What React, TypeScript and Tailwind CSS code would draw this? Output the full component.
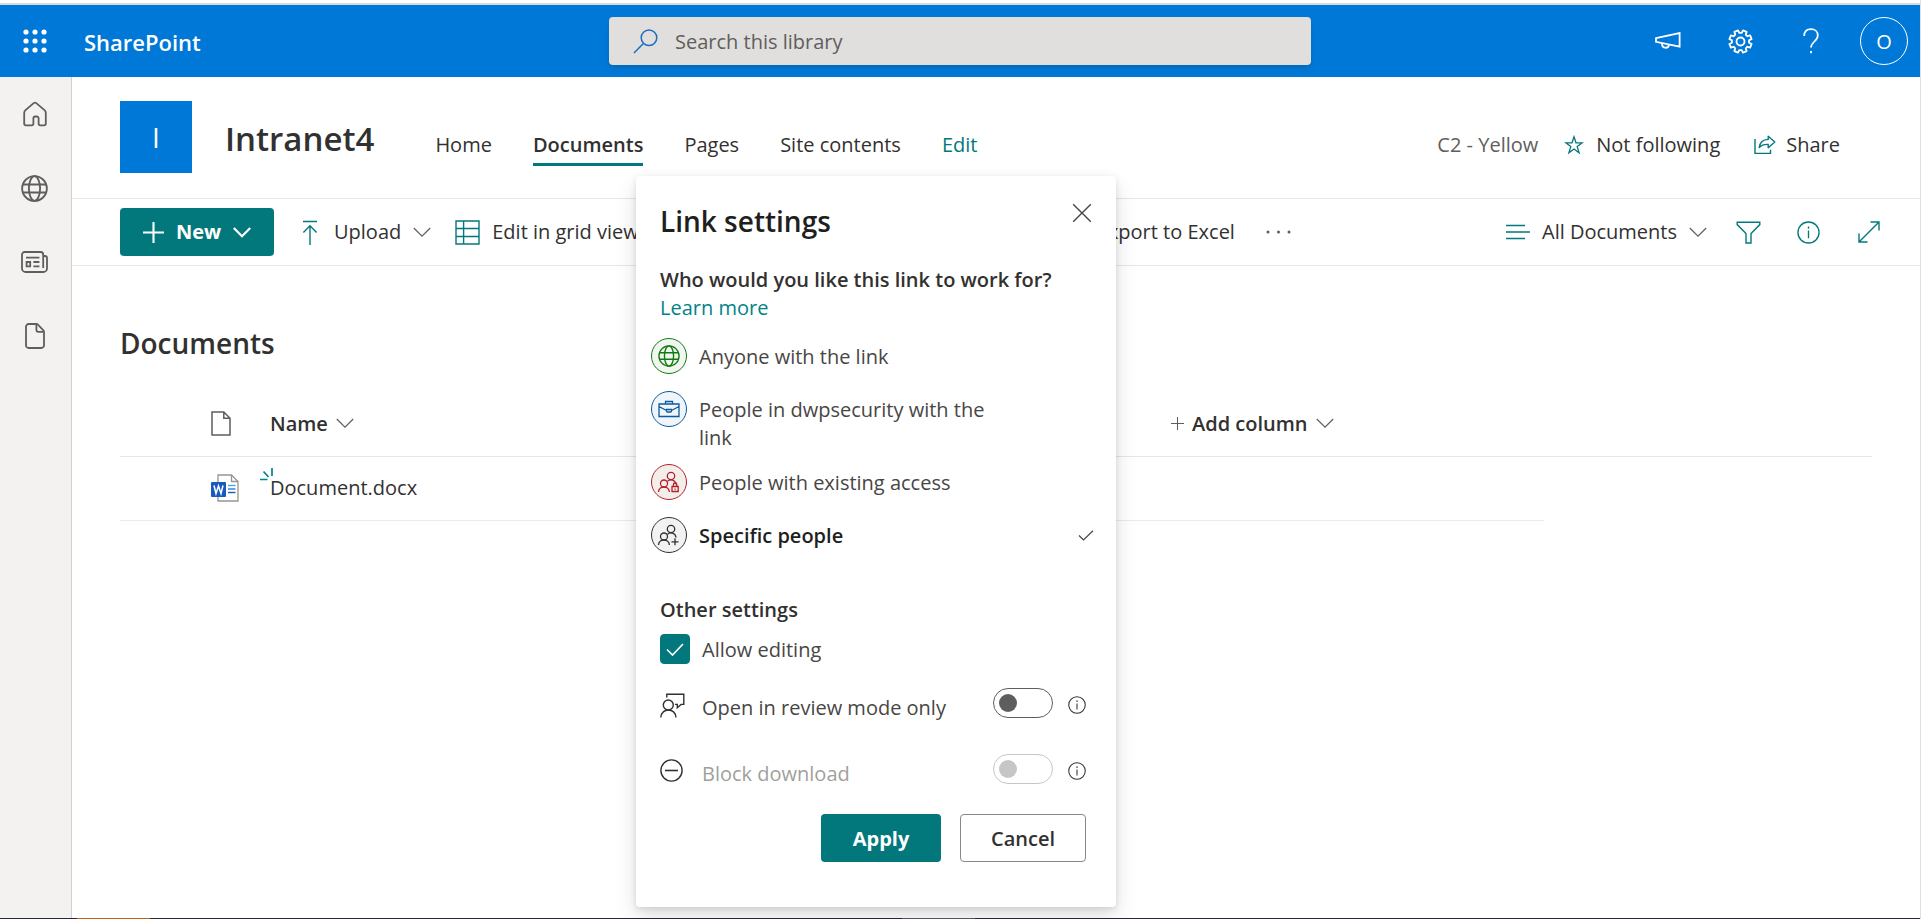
import type { ReactNode } from "react";

type IconProps = {
  w: number;
  h: number;
  stroke?: number;
  className?: string;
  children: ReactNode;
};

function Icon({ w, h, stroke = 1.4, className = "", children }: IconProps) {
  return (
    <svg
      width={w}
      height={h}
      viewBox={`0 0 ${w} ${h}`}
      fill="none"
      stroke="currentColor"
      strokeWidth={stroke}
      className={`shrink-0 ${className}`}
      aria-hidden="true"
    >
      {children}
    </svg>
  );
}

const teal = "text-[#03787c]";

/* ---------- icons ---------- */

function Waffle() {
  const steps = [3, 12, 21];
  return (
    <Icon w={24} h={24}>
      {steps.map((y) =>
        steps.map((x) => <circle key={`${x}-${y}`} cx={x} cy={y} r={2.6} fill="currentColor" stroke="none" />),
      )}
    </Icon>
  );
}

function SearchIcon() {
  return (
    <Icon w={25} h={25} stroke={1.5} className="text-[#1b6ec2]">
      <circle cx="16" cy="8.8" r="7.8" />
      <path d="M10.4 14.4 1 24" />
    </Icon>
  );
}

function Megaphone() {
  return (
    <Icon w={26} h={18} stroke={1.8}>
      <path d="M1 6.2 24.6 1v13.6L1 9.8Z" />
      <path d="M7 11.2c0 6 6.6 5.6 7 1.4" />
    </Icon>
  );
}

/* Eight-toothed outline, built once from polar coordinates. */
const gearPath = (() => {
  const points: string[] = [];
  const offsets: [number, number][] = [
    [-15, 8.6],
    [-10, 11.4],
    [10, 11.4],
    [15, 8.6],
  ];
  for (let i = 0; i < 8; i += 1) {
    const base = 22.5 + i * 45;
    offsets.forEach(([da, r]) => {
      const a = ((base + da) * Math.PI) / 180;
      points.push(`${(12.5 + r * Math.cos(a)).toFixed(2)} ${(12.5 + r * Math.sin(a)).toFixed(2)}`);
    });
  }
  return `M${points.join("L")}Z`;
})();

function Gear() {
  return (
    <Icon w={25} h={25} stroke={1.8}>
      <path d={gearPath} strokeLinejoin="round" />
      <circle cx="12.5" cy="12.5" r="4" />
    </Icon>
  );
}

function Help() {
  return (
    <Icon w={16} h={26} stroke={1.7}>
      <path d="M1.2 8C1.2 3.6 4 1.2 8 1.2s6.8 2.5 6.8 6.3c0 5.6-6.8 6.4-6.8 12" />
      <path d="M8 23v2.2" strokeWidth="2" />
    </Icon>
  );
}

function Home() {
  return (
    <Icon w={26} h={26} stroke={1.8}>
      <path
        d="M13 1.6c.5 0 .9.2 1.3.5l8.2 7c.9.8 1.3 1.7 1.3 2.8v10.6c0 1-.8 1.8-1.8 1.8h-3.6c-1 0-1.8-.8-1.8-1.8v-5.2c0-1-.8-1.8-1.8-1.8h-1.6c-1 0-1.8.8-1.8 1.8v5.2c0 1-.8 1.8-1.8 1.8H4c-1 0-1.8-.8-1.8-1.8V11.9c0-1.1.4-2 1.3-2.8l8.2-7c.4-.3.8-.5 1.3-.5Z"
        strokeLinejoin="round"
      />
    </Icon>
  );
}

function Globe({ size, stroke }: { size: number; stroke: number }) {
  return (
    <svg
      width={size}
      height={size}
      viewBox="0 0 26 26"
      fill="none"
      stroke="currentColor"
      strokeWidth={stroke}
      aria-hidden="true"
    >
      <circle cx="13" cy="13" r="11.9" />
      <ellipse cx="13" cy="13" rx="5.4" ry="11.9" />
      <path d="M1.9 9.2h22.2M1.9 16.8h22.2" />
    </svg>
  );
}

function News() {
  return (
    <Icon w={27} h={22} stroke={1.8}>
      <path d="M22.2 17V3.6A2.6 2.6 0 0 0 19.6 1h-16A2.6 2.6 0 0 0 1 3.6v13.8A3.6 3.6 0 0 0 4.6 21h17.8a3.6 3.6 0 0 0 3.6-3.6V7.2A2.2 2.2 0 0 0 23.8 5h-1.6" />
      <path d="M5 6.6h13.4M12.4 11h6M12.4 15.4h6M5.6 11h3.6v4.4H5.6Z" />
    </Icon>
  );
}

function Page() {
  return (
    <Icon w={20} h={26} stroke={1.8}>
      <path
        d="M3.6 1h7.8c.6 0 1.1.2 1.5.6l5.5 5.7c.4.4.6.9.6 1.5v13.6a2.6 2.6 0 0 1-2.6 2.6H3.6A2.6 2.6 0 0 1 1 22.4V3.6A2.6 2.6 0 0 1 3.6 1Z"
        strokeLinejoin="round"
      />
      <path d="M11.4 1.2v5.6c0 1.1.9 2 2 2h5.4" />
    </Icon>
  );
}

function Chevron({ stroke = 1.2, className = "text-[#605e5c]" }: { stroke?: number; className?: string }) {
  return (
    <Icon w={18} h={11} stroke={stroke} className={className}>
      <path d="m.8 1 8.2 8.2L17.2 1" />
    </Icon>
  );
}

function Plus({ size, stroke, className = "" }: { size: number; stroke: number; className?: string }) {
  return (
    <svg
      width={size}
      height={size}
      viewBox="0 0 20 20"
      stroke="currentColor"
      strokeWidth={stroke}
      className={`shrink-0 ${className}`}
      aria-hidden="true"
    >
      <path d="M10 0v20M0 10h20" />
    </svg>
  );
}

function UploadIcon() {
  return (
    <Icon w={16} h={25} className={teal}>
      <path d="M1 1.5h14M8 25V6M1.4 12.4 8 5.8l6.6 6.6" />
    </Icon>
  );
}

function GridIcon() {
  return (
    <Icon w={25} h={25} className={teal}>
      <path d="M1 1h23v23H1ZM8.6 1v23M1 8.5h23M1 16.5h23" />
    </Icon>
  );
}

function ListIcon() {
  return (
    <Icon w={25} h={16} stroke={1.5} className={teal}>
      <path d="M1 1.5h19M1 8h24M1 14.5h19" />
    </Icon>
  );
}

function FilterIcon() {
  return (
    <Icon w={25} h={23} className={teal}>
      <path d="M1.2 1.2h22.6v2.4l-8.8 9V22h-5v-9.4l-8.8-9Z" />
    </Icon>
  );
}

function InfoIcon({ size, stroke }: { size: number; stroke: number }) {
  return (
    <svg
      width={size}
      height={size}
      viewBox="0 0 24 24"
      fill="none"
      stroke="currentColor"
      strokeWidth={stroke}
      className="shrink-0"
      aria-hidden="true"
    >
      <circle cx="12" cy="12" r="11" />
      <path d="M12 10v8M12 5.8V8" />
    </svg>
  );
}

function ExpandIcon() {
  return (
    <Icon w={22} h={22} className={teal}>
      <path d="M1.5 20.5l19-19M12.500 1H21v8.500M1 12.500V21h8.500" />
    </Icon>
  );
}

function StarIcon() {
  return (
    <Icon w={20} h={20} stroke={1.3} className={teal}>
      <path d="m10 1.800 2 6h6.200l-5 3.800 1.900 6.200-5.100-3.800-5.100 3.800 1.900-6.200-5-3.800H8Z" />
    </Icon>
  );
}

function ShareIcon() {
  return (
    <Icon w={22} h={20} className={teal}>
      <path d="M1 4v14.400h15.500v-3.600" />
      <path
        d="M5.200 12.600C5.800 7.600 9 4.600 14.200 4.400V1.200L20.800 7l-6.600 5.800V9.400C10 9.200 7.400 10 5.200 12.600Z"
        strokeLinejoin="round"
      />
    </Icon>
  );
}

function DocOutline() {
  return (
    <Icon w={20} h={25} stroke={1.5} className="text-[#605e5c]">
      <path d="M1 1h11.800L19 7.200V24H1ZM12.800 1v6.200H19" />
    </Icon>
  );
}

function WordIcon() {
  return (
    <svg width="28" height="28" viewBox="0 0 28 28" aria-hidden="true" className="block">
      <path d="M7 1h13.500L27 7.500V27H7Z" fill="#fff" stroke="#979593" strokeWidth="1.3" />
      <path d="M20.500 1v6.500H27" fill="none" stroke="#979593" strokeWidth="1.3" />
      <path d="M17 11.500h7.500" stroke="#41a5ee" strokeWidth="1.4" />
      <path d="M17 15h7.500" stroke="#2b7cd3" strokeWidth="1.4" />
      <path d="M17 18.500h7.500" stroke="#185abd" strokeWidth="1.4" />
      <rect x="0" y="8" width="15" height="15" rx="1" fill="#185abd" />
      <path d="m3 11.500 2 8 2.500-7.600 2.500 7.600 2-8" fill="none" stroke="#fff" strokeWidth="1.5" />
    </svg>
  );
}

function NewSpark() {
  return (
    <Icon w={13} h={13} stroke={1.7} className="text-[#038387]">
      <path d="M0 11.500h7.500M3.500 3.500l5 5.500M12 0v8" />
    </Icon>
  );
}

function CloseIcon() {
  return (
    <Icon w={20} h={20} stroke={1.4}>
      <path d="m1.200 1.200 17.600 17.600M18.800 1.200 1.200 18.800" />
    </Icon>
  );
}

function Briefcase() {
  return (
    <Icon w={22} h={18} stroke={1.3}>
      <path d="M1 4h20v12.500H1ZM7.500 4V1.500h7V4M1 6.500l7.500 4M21 6.500l-7.500 4M8.500 9.500h5V11a1 1 0 0 1-1 1h-3a1 1 0 0 1-1-1Z" />
    </Icon>
  );
}

function PeoplePair({ children }: { children: ReactNode }) {
  return (
    <Icon w={24} h={24} stroke={1.3}>
      <circle cx="14" cy="6" r="3.700" />
      <path d="M10.500 11.200c2.600-2.400 8-1.700 8.500 3.300" />
      <circle cx="7" cy="13.500" r="3.500" />
      <path d="M1.500 22c.2-6.700 10.600-6.700 10.900 0" />
      {children}
    </Icon>
  );
}

function PeopleLock() {
  return (
    <PeoplePair>
      <path d="M15 16.500h6.200v5H15ZM16.400 16.300v-1.500c0-2.400 3.400-2.400 3.400 0v1.500M18.100 18.400v1.300" />
    </PeoplePair>
  );
}

function PeopleAdd() {
  return (
    <PeoplePair>
      <path d="M14.500 18.800h7M18 15.300v7" />
    </PeoplePair>
  );
}

function ReviewIcon() {
  return (
    <Icon w={25} h={25} stroke={1.4} className="text-[#323130]">
      <circle cx="8.300" cy="12" r="5" />
      <path d="M.8 24.500c.4-10 14.800-10 15.200 0" />
      <path d="M6.800 4.500V1.200h17v10.200h-2.700l-3.800 3.400v-3.400H15" />
    </Icon>
  );
}

function BlockIcon() {
  return (
    <Icon w={23} h={23} stroke={1.4} className="text-[#323130]">
      <circle cx="11.500" cy="11.500" r="10.600" />
      <path d="M5 11.500h13" strokeWidth="1.6" />
    </Icon>
  );
}

/* ---------- page sections ---------- */

function SuiteBar() {
  return (
    <header className="grid h-[72px] grid-cols-[1fr_702px_1fr] items-center bg-[#0078d7] text-white">
      <div className="flex items-center">
        <button
          type="button"
          aria-label="App launcher"
          className="flex h-[72px] w-[72px] items-center justify-center pr-0.5"
        >
          <Waffle />
        </button>
        <a href="#" className="ml-3 pt-0.5 text-[22px] leading-8 font-semibold">
          SharePoint
        </a>
      </div>
      <div className="flex h-12 items-center gap-[17px] rounded bg-[#e1dfdd] pl-6 shadow-md">
        <SearchIcon />
        <input
          type="search"
          aria-label="Search this library"
          placeholder="Search this library"
          className="min-w-0 flex-1 bg-transparent pt-0.5 text-xl text-[#323130] outline-none placeholder:text-[#605e5c]"
        />
      </div>
      <div className="flex justify-end">
        <button type="button" aria-label="Announcements" className="flex h-[72px] w-[72px] items-center justify-center">
          <Megaphone />
        </button>
        <button type="button" aria-label="Settings" className="flex h-[72px] w-[72px] items-center justify-center">
          <Gear />
        </button>
        <button type="button" aria-label="Help" className="flex h-[72px] w-[72px] items-center justify-center pr-0.5">
          <Help />
        </button>
        <button type="button" aria-label="Account" className="flex h-[72px] w-[72px] items-center justify-center">
          <span className="flex h-12 w-12 items-center justify-center rounded-full border border-white pt-0.5 text-xl">
            O
          </span>
        </button>
      </div>
    </header>
  );
}

function SideRail() {
  const items: { label: string; icon: ReactNode }[] = [
    { label: "Home site", icon: <Home /> },
    { label: "My sites", icon: <Globe size={27} stroke={1.8} /> },
    { label: "News", icon: <News /> },
    { label: "Files", icon: <Page /> },
  ];
  return (
    <aside className="flex w-[72px] shrink-0 flex-col border-r border-[#d2d0ce] bg-[#f3f2f1] text-[#605e5c]">
      {items.map((item) => (
        <button
          key={item.label}
          type="button"
          aria-label={item.label}
          className="flex h-[74px] items-center justify-center pr-0.5"
        >
          {item.icon}
        </button>
      ))}
    </aside>
  );
}

function SiteHeader() {
  const link = "border-y-[3px] border-transparent pt-0.5";
  return (
    <div className="flex items-start border-b border-[#e6e6e6] px-12 pt-6 pb-[25px]">
      <div className="flex h-[72px] w-[72px] items-center justify-center bg-[#0078d7] text-[28px] text-white">I</div>
      <div className="flex h-[72px] flex-1 items-center">
        <h1 className="mt-1 ml-[33px] text-[33px] leading-[44px] font-semibold text-[#323130]">Intranet4</h1>
        <nav className="mt-[14px] ml-[61px] flex gap-[41px] text-xl leading-9 text-[#323130]">
          <a href="#" className={link}>
            Home
          </a>
          <a
            href="#"
            aria-current="page"
            className="border-t-[3px] border-b-[3px] border-t-transparent border-b-[#03787c] pt-0.5 font-semibold"
          >
            Documents
          </a>
          <a href="#" className={link}>
            Pages
          </a>
          <a href="#" className={link}>
            Site contents
          </a>
          <a href="#" className={`${link} text-[#03787c]`}>
            Edit
          </a>
        </nav>
        <div className="mt-4 mr-8 ml-auto flex items-center text-xl leading-7 text-[#323130]">
          <span className="mr-[26px] text-[#605e5c]">C2 - Yellow</span>
          <button type="button" className="mr-[34px] flex items-center gap-3">
            <StarIcon />
            Not following
          </button>
          <button type="button" className="flex items-center gap-2.5">
            <ShareIcon />
            Share
          </button>
        </div>
      </div>
    </div>
  );
}

function CommandBar() {
  return (
    <div className="flex h-[67px] items-center border-b border-[#e6e6e6] pr-10 pl-12 text-xl leading-7 whitespace-nowrap text-[#323130]">
      <button
        type="button"
        className="flex h-12 w-[154px] items-center justify-center gap-3 rounded-sm bg-[#03787c] font-bold text-white"
      >
        <Plus size={21} stroke={2} />
        New
        <Chevron stroke={2.2} className="text-white" />
      </button>
      <button type="button" className="ml-7 flex items-center">
        <UploadIcon />
        <span className="mr-3 ml-4">Upload</span>
        <Chevron />
      </button>
      <button type="button" className="ml-6 flex items-center gap-3">
        <GridIcon />
        Edit in grid view
      </button>
      <button type="button" className="ml-[458px]">
        Export to Excel
      </button>
      <button type="button" aria-label="More" className="ml-[31px]">
        <Icon w={26} h={4} className="text-[#605e5c]">
          <circle cx="2" cy="2" r="1.500" fill="currentColor" stroke="none" />
          <circle cx="12.500" cy="2" r="1.500" fill="currentColor" stroke="none" />
          <circle cx="23" cy="2" r="1.500" fill="currentColor" stroke="none" />
        </Icon>
      </button>
      <div className="ml-auto flex items-center">
        <button type="button" className="mr-[29px] flex items-center gap-3">
          <ListIcon />
          All Documents
          <Chevron />
        </button>
        <button type="button" aria-label="Filter" className="mr-9">
          <FilterIcon />
        </button>
        <button type="button" aria-label="Details" className={`mr-[38px] ${teal}`}>
          <InfoIcon size={23} stroke={1.4} />
        </button>
        <button type="button" aria-label="Expand">
          <ExpandIcon />
        </button>
      </div>
    </div>
  );
}

function Library() {
  return (
    <section className="px-12 pt-[57px]">
      <h2 className="text-[28px] leading-10 font-semibold text-[#323130]">Documents</h2>
      <table className="mt-[29px] w-full table-fixed border-collapse text-left text-xl leading-7 text-[#323130]">
        <colgroup>
          <col className="w-[72px]" />
          <col className="w-[64px]" />
          <col />
          <col className="w-[387px]" />
          <col className="w-[328px]" />
        </colgroup>
        <thead>
          <tr className="h-16 border-b border-[#e6e6e6]">
            <th aria-label="Select" className="p-0" />
            <th aria-label="File type" className="p-0 pl-[19px]">
              <DocOutline />
            </th>
            <th className="p-0 pl-3.5 font-semibold">
              <button type="button" className="flex items-center gap-2">
                Name
                <Chevron />
              </button>
            </th>
            <th className="p-0 pl-3.5 font-semibold">
              <button type="button" className="flex items-center gap-2">
                <Plus size={13} stroke={1.6} className="text-[#605e5c]" />
                Add column
                <Chevron />
              </button>
            </th>
            <th aria-label="Spare" className="p-0" />
          </tr>
        </thead>
        <tbody>
          <tr className="h-16">
            <td className="border-b border-[#edebe9] p-0" />
            <td className="border-b border-[#edebe9] p-0 pl-[19px]">
              <WordIcon />
            </td>
            <td className="border-b border-[#edebe9] p-0 pl-3.5">
              <a href="#" className="relative">
                <span className="absolute -top-1.5 -left-2.5">
                  <NewSpark />
                </span>
                Document.docx
              </a>
            </td>
            <td className="border-b border-[#edebe9] p-0" />
            <td className="p-0" />
          </tr>
        </tbody>
      </table>
    </section>
  );
}

/* ---------- dialog ---------- */

type Scope = { id: string; label: string; tone: string; icon: ReactNode; selected?: boolean };

const scopes: Scope[] = [
  {
    id: "anyone",
    label: "Anyone with the link",
    tone: "border-[#107c10] bg-[#f1f6f1] text-[#107c10]",
    icon: <Globe size={22} stroke={1.6} />,
  },
  {
    id: "org",
    label: "People in dwpsecurity with the link",
    tone: "border-[#0b5a9e] bg-[#eff5fa] text-[#0b5a9e]",
    icon: <Briefcase />,
  },
  {
    id: "existing",
    label: "People with existing access",
    tone: "border-[#b3202c] bg-[#f4eeea] text-[#b3202c]",
    icon: <PeopleLock />,
  },
  {
    id: "specific",
    label: "Specific people",
    tone: "border-[#323130] bg-[#f2f2f2] text-[#323130]",
    icon: <PeopleAdd />,
    selected: true,
  },
];

function ScopeOption({ scope }: { scope: Scope }) {
  return (
    <label className="flex items-start">
      <input type="radio" name="scope" value={scope.id} defaultChecked={scope.selected} className="sr-only" />
      <span className={`mb-[5px] flex h-9 w-9 shrink-0 items-center justify-center rounded-full border ${scope.tone}`}>
        {scope.icon}
      </span>
      <span
        className={`mt-[5px] ml-3 max-w-[300px] text-xl leading-7 ${
          scope.selected ? "font-semibold text-[#201f1e]" : "text-[#484644]"
        }`}
      >
        {scope.label}
      </span>
      {scope.selected && (
        <Icon w={16} h={11} stroke={1.2} className="mt-[13px] -mr-0.5 ml-auto text-[#484644]">
          <path d="m1 5.500 4.500 4.500L15 .8" />
        </Icon>
      )}
    </label>
  );
}

function SwitchRow({
  id,
  label,
  icon,
  disabled = false,
}: {
  id: string;
  label: string;
  icon: ReactNode;
  disabled?: boolean;
}) {
  return (
    <div className="flex items-start pr-1.5">
      <span className="mt-[5px] w-[42px]">{icon}</span>
      <label
        htmlFor={id}
        className={`mt-1.5 text-xl leading-7 ${disabled ? "text-[#a19f9d]" : "text-[#484644]"}`}
      >
        {label}
      </label>
      <input
        id={id}
        type="checkbox"
        role="switch"
        disabled={disabled}
        className="ml-auto flex h-[30px] w-[60px] appearance-none items-center rounded-full border border-[#605e5c] px-[5px] before:h-[18px] before:w-[18px] before:rounded-full before:bg-[#605e5c] before:content-[''] disabled:border-[#c8c6c4] disabled:before:bg-[#c8c6c4]"
      />
      <button type="button" aria-label={`About ${label}`} className="mt-2 ml-[15px] text-[#323130]">
        <InfoIcon size={18} stroke={1.4} />
      </button>
    </div>
  );
}

function LinkSettings() {
  return (
    <div
      role="dialog"
      aria-labelledby="link-settings-title"
      className="absolute top-[176px] left-[636px] w-[480px] rounded-sm bg-white px-6 pt-[27px] pb-[45px] shadow-[0_10px_22px_rgba(0,0,0,0.13),0_2px_6px_rgba(0,0,0,0.11)]"
    >
      <div className="-mr-2 flex items-start justify-between">
        <h2 id="link-settings-title" className="text-[28px] leading-9 font-semibold text-[#201f1e]">
          Link settings
        </h2>
        <button
          type="button"
          aria-label="Close"
          className="-mt-2 flex h-9 w-9 items-center justify-center text-[#484644]"
        >
          <CloseIcon />
        </button>
      </div>
      <p className="mt-[27px] text-xl leading-7 font-semibold text-[#323130]">
        Who would you like this link to work for?
      </p>
      <a href="#" className="block text-xl leading-7 text-[#038387]">
        Learn more
      </a>
      <fieldset className="mt-4 -ml-[9px] flex flex-col gap-3">
        {scopes.map((scope) => (
          <ScopeOption key={scope.id} scope={scope} />
        ))}
      </fieldset>
      <h3 className="mt-[38px] text-xl leading-7 font-semibold text-[#323130]">Other settings</h3>
      <label className="mt-2.5 flex items-start gap-3 text-xl leading-8 text-[#484644]">
        <span className="relative h-[30px] w-[30px]">
          <input
            type="checkbox"
            defaultChecked
            className="block h-[30px] w-[30px] appearance-none rounded-sm border border-[#605e5c] checked:border-[#03787c] checked:bg-[#03787c]"
          />
          <Icon w={18} h={13} stroke={1.7} className="pointer-events-none absolute top-[9px] left-1.5 text-white">
            <path d="m1 6.500 5.500 5.500L17 1" />
          </Icon>
        </span>
        <span>Allow editing</span>
      </label>
      <div className="mt-[22px] flex flex-col gap-8">
        <SwitchRow id="review-mode" label="Open in review mode only" icon={<ReviewIcon />} />
        <SwitchRow id="block-download" label="Block download" icon={<BlockIcon />} disabled />
      </div>
      <div className="mt-[26px] flex justify-end gap-[19px] pr-1.5 text-xl">
        <button type="button" className="h-12 w-[120px] rounded-sm bg-[#03787c] pt-0.5 font-bold text-white">
          Apply
        </button>
        <button
          type="button"
          className="h-12 w-[126px] rounded-sm border border-[#8a8886] bg-white pt-0.5 font-semibold text-[#323130]"
        >
          Cancel
        </button>
      </div>
    </div>
  );
}

export default function App() {
  return (
    <div className="relative flex min-h-screen flex-col border-r border-[#e1dfdd] bg-white font-['Open_Sans','Noto_Sans',sans-serif]">
      <div className="h-[5px] border-b-2 border-[#d8dbe0]" />
      <SuiteBar />
      <div className="flex flex-1">
        <SideRail />
        <main className="min-w-0 flex-1">
          <SiteHeader />
          <CommandBar />
          <Library />
        </main>
      </div>
      <div className="flex h-px bg-[#2b2540]">
        <div className="ml-[77px] w-[73px] bg-[#b5651d]" />
        <div className="ml-[752px] w-[73px] bg-[#5a5568]" />
      </div>
      <LinkSettings />
    </div>
  );
}
